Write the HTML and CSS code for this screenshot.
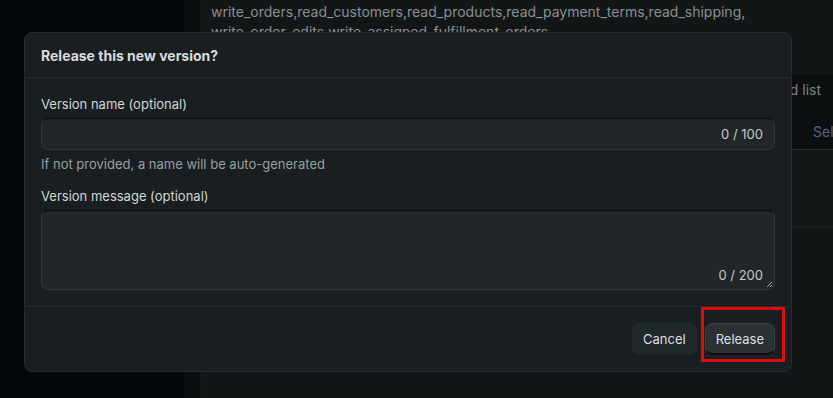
FILE: index.html
```html
<!DOCTYPE html>
<html>
<head>
<meta charset="utf-8">
<link rel="stylesheet" href="styles.css">
</head>
<body>
<div class="page">
  <aside class="sidebar"></aside>
  <div class="rail"></div>
  <main class="main">
    <p class="scopes">write_orders,read_customers,read_products,read_payment_terms,read_shipping,<br>write_order_edits,write_assigned_fulfillment_orders</p>
    <section class="card">
      <div class="card-title">Add to allowed list</div>
      <div class="card-action">Select</div>
    </section>
    <section class="panel"></section>
  </main>
</div>

<div class="modal" role="dialog">
  <header class="modal-header">
    <h2 class="modal-title">Release this new version?</h2>
  </header>
  <div class="modal-body">
    <label class="field-label">Version name (optional)</label>
    <div class="input">
      <span class="counter">0 / 100</span>
    </div>
    <p class="help">If not provided, a name will be auto-generated</p>
    <label class="field-label second">Version message (optional)</label>
    <div class="textarea">
      <span class="counter">0 / 200</span>
      <svg class="grip" width="8" height="8" viewBox="0 0 8 8"><path d="M7 2 L2 7 M7 5 L5 7" stroke="#9aa1a4" stroke-width="1"/></svg>
    </div>
  </div>
  <footer class="modal-footer">
    <button class="btn btn-cancel">Cancel</button>
    <div class="highlight-wrap">
      <button class="btn btn-release">Release</button>
      <span class="highlight"></span>
    </div>
  </footer>
</div>
</body>
</html>
```
FILE: styles.css
```css
* { box-sizing: border-box; }
html, body { margin: 0; height: 100%; }
body {
  font-family: Inter, "Noto Sans", sans-serif;
  background: #05080a;
  overflow: hidden;
}
.page {
  display: flex;
  height: 398px;
}
.sidebar {
  width: 183px;
  flex-shrink: 0;
}
.rail {
  width: 18px;
  flex-shrink: 0;
  background: #090c0d;
  border-right: 1px solid #161a1c;
}
.main {
  flex: 1;
  min-width: 0;
  background: #131617;
  display: flex;
  flex-direction: column;
}
.scopes {
  margin: 2px 0 0 10px;
  font-size: 14px;
  line-height: 20px;
  color: #8b8f91;
  height: 73px;
  white-space: nowrap;
}
.card {
  background: #0c0f10;
  border-bottom: 1px solid #262b2d;
  height: 75px;
  display: flex;
  flex-direction: column;
}
.card-title {
  align-self: flex-end;
  padding-right: 12px;
  margin-top: 6px;
  font-size: 14px;
  line-height: 18px;
  color: #7d8183;
}
.card-action {
  margin-top: 24px;
  padding-left: 612px;
  font-size: 14px;
  color: #56628a;
  white-space: nowrap;
}
.panel {
  height: 78px;
  background: #141819;
  border-bottom: 1px solid #1c2123;
}

.modal {
  position: fixed;
  left: 24px;
  top: 32px;
  width: 768px;
  height: 340px;
  background: #191e20;
  border: 1px solid #242d30;
  border-radius: 8px;
  display: flex;
  flex-direction: column;
  color: #d8dbdc;
}
.modal-header {
  height: 45px;
  padding: 0 16px;
  display: flex;
  align-items: center;
  border-bottom: 1px solid #232c2f;
}
.modal-title {
  margin: 0;
  font-size: 14px;
  font-weight: 700;
  color: #d9dcdd;
}
.modal-body {
  padding: 18px 16px 16px;
  display: flex;
  flex-direction: column;
  border-bottom: 1px solid #232c2f;
}
.field-label {
  font-size: 13px;
  line-height: 16px;
  color: #d3d6d7;
}
.field-label.second { margin-top: 16px; }
.input, .textarea {
  margin-top: 6px;
  background: #212729;
  border: 1px solid #2e3639;
  border-top-color: #0a0d0e;
  border-radius: 7px;
  display: flex;
  justify-content: flex-end;
  position: relative;
}
.input {
  height: 32px;
  align-items: center;
  padding-right: 11px;
}
.textarea {
  height: 80px;
  align-items: flex-end;
  padding: 0 11px 6px 0;
}
.counter {
  font-size: 13px;
  color: #c5c9cb;
}
.grip {
  position: absolute;
  right: 1px;
  bottom: 1px;
}
.help {
  margin: 6px 0 0;
  font-size: 13px;
  line-height: 16px;
  color: #9a9fa2;
}
.modal-footer {
  flex: 1;
  display: flex;
  justify-content: flex-end;
  align-items: flex-start;
  gap: 8px;
  padding: 16px 16px 0;
}
.btn {
  font-family: inherit;
  font-size: 13px;
  height: 32px;
  border-radius: 8px;
  border: none;
  padding: 0 11px;
  color: #dcdfe0;
}
.btn-cancel {
  background: #21282a;
}
.btn-release {
  background: #2a3033;
  border: 1px solid #394144;
  border-bottom: 2px solid #0b0d0e;
  padding: 0 10px;
}
.highlight-wrap {
  position: relative;
}
.highlight {
  position: absolute;
  left: -4px;
  top: -16px;
  width: 84px;
  height: 55px;
  border: 3px solid #dd0b0b;
}
```
